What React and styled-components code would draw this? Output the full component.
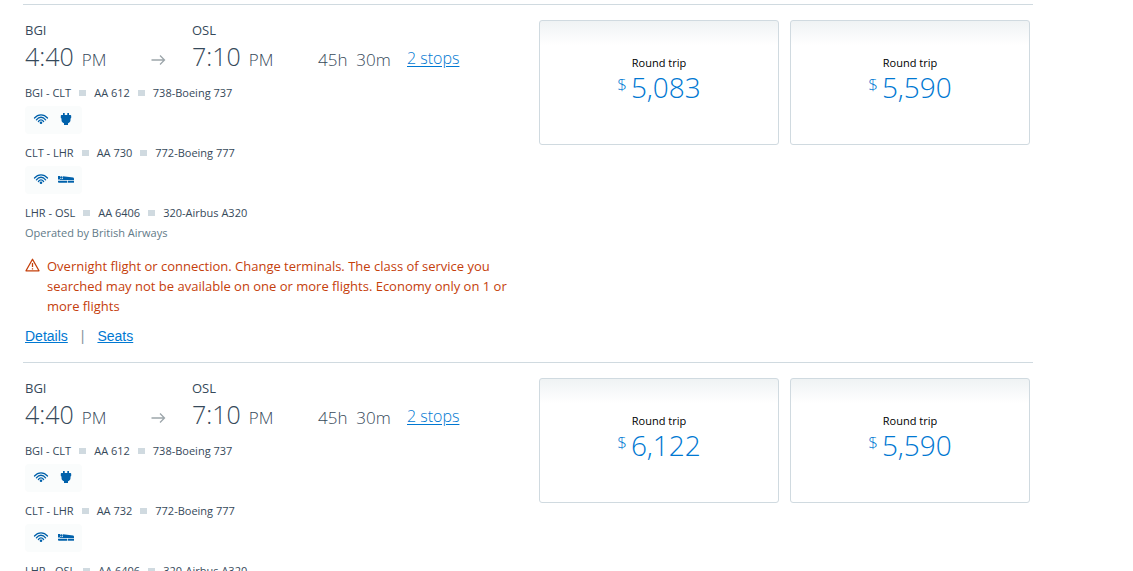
import React from "react";
import styled, { createGlobalStyle } from "styled-components";

const GlobalStyle = createGlobalStyle`
  * { box-sizing: border-box; }
  body {
    margin: 0;
    background: #fff;
    color: #36495a;
    font-family: "Open Sans", "Noto Sans", sans-serif;
  }
`;

const Results = styled.main`
  padding: 4px 100px 0 23px;
`;

const FlightRow = styled.article`
  display: grid;
  grid-template-columns: minmax(0, 1fr) 240px 240px;
  column-gap: 11px;
  align-items: start;
  padding: 15px 3px 16px 2px;
  border-top: 1px solid #d0dae0;
`;

const FlightInfo = styled.div`
  min-width: 0;
`;

const Summary = styled.div`
  display: grid;
  grid-template-columns: 126px 41px 126px 89px 1fr;
  grid-template-rows: 20px 36px;
  align-items: baseline;
  margin-bottom: 7px;
`;

const Airport = styled.span`
  grid-row: 1;
  grid-column: ${(p) => p.$column};
  font-size: 13px;
  line-height: 20px;
`;

const Time = styled.span`
  grid-row: 2;
  grid-column: ${(p) => p.$column};
  font-size: 25px;
  font-weight: 300;
  line-height: 32px;
  white-space: nowrap;
`;

const Meridiem = styled.span`
  margin-left: 8px;
  font-size: 17px;
`;

const ArrowIcon = styled.svg`
  grid-row: 2;
  grid-column: 2;
  align-self: center;
  margin-top: 4px;
  width: 15px;
  height: 12px;
`;

const Duration = styled.span`
  grid-row: 2;
  grid-column: 4;
  font-size: 17px;
  font-weight: 300;
  white-space: pre;
`;

const StopsLink = styled.a`
  grid-row: 2;
  grid-column: 5;
  align-self: start;
  justify-self: start;
  font-size: 16px;
  font-weight: 300;
  line-height: 36px;
  color: #0078d2;
  text-underline-offset: 2px;
`;

const Segments = styled.ul`
  display: grid;
  row-gap: 9px;
  margin: 0;
  padding: 0;
  list-style: none;
`;

const SegmentLine = styled.div`
  display: flex;
  align-items: center;
  gap: 8px;
  font-size: 11px;
  line-height: 20px;
`;

const Square = styled.span`
  width: 7px;
  height: 6px;
  background: #d0dae0;
`;

const Amenities = styled.div`
  display: flex;
  align-items: center;
  gap: 9px;
  width: 57px;
  height: 28px;
  margin-top: 3px;
  padding: 0 8px 2px;
  border-radius: 4px;
  background: #fafcfc;
`;

const AmenityIcon = styled.svg`
  width: 16px;
  height: 16px;
`;

const Operator = styled.div`
  font-size: 11px;
  line-height: 20px;
  color: #627a88;
`;

const Notice = styled.p`
  display: grid;
  grid-template-columns: 14px minmax(0, 1fr);
  column-gap: 8px;
  max-width: 488px;
  margin: 13px 0 10px;
  font-size: 13px;
  line-height: 20px;
  color: #c5400b;
`;

const NoticeIcon = styled.svg`
  width: 15px;
  height: 14px;
  margin-top: 2px;
`;

const Actions = styled.nav`
  display: flex;
  gap: 13px;
  font-family: "Liberation Sans", Arial, sans-serif;
  font-size: 14px;
  line-height: 20px;
  color: #8a959e;
`;

const ActionLink = styled.a`
  color: #0078d2;
`;

const FareCard = styled.button`
  display: flex;
  flex-direction: column;
  align-items: center;
  min-height: 125px;
  padding: 34px 8px;
  border: 1px solid #d0dae0;
  border-radius: 3px;
  background: linear-gradient(#eff3f4, #fff 24px);
  font-family: inherit;
  cursor: pointer;
`;

const FareLabel = styled.span`
  font-size: 11px;
  line-height: 16px;
  color: #000;
`;

const Price = styled.span`
  display: flex;
  align-items: flex-start;
  gap: 4px;
  font-size: 28px;
  font-weight: 300;
  line-height: 32px;
  color: #0078d2;
`;

const Currency = styled.span`
  font-size: 17px;
  line-height: 28px;
`;

const Wifi = () => (
  <AmenityIcon viewBox="0 0 16 16" role="img" aria-label="Wi-Fi">
    <g fill="none" stroke="#0061ab" strokeWidth="1.3" strokeLinecap="round">
      <path d="M1.500 7C5.200 2.700 10.800 2.700 14.500 7" />
      <path d="M3.400 8.800C6.200 5.400 9.800 5.400 12.600 8.800" />
      <path d="M5.400 10.500C7 8.300 9 8.300 10.600 10.500" />
    </g>
    <circle cx="8" cy="11.700" r="1.300" fill="#0061ab" />
  </AmenityIcon>
);

const Plug = () => (
  <AmenityIcon viewBox="0 0 16 16" role="img" aria-label="Power outlet">
    <path
      fill="#0061ab"
      d="M5 2h1.700v2h2.600V2H11v2h1.400q.8 0 .8.800v2q0 .7-.7.800v1.300c0 1.700-1 2.800-2.500 3.300V14H6v-1.800C4.500 11.700 3.500 10.600 3.500 8.900V7.600q-.7-.1-.7-.8v-2q0-.8.8-.8H5z"
    />
  </AmenityIcon>
);

const FlatSeat = () => (
  <AmenityIcon viewBox="0 0 16 16" role="img" aria-label="Lie-flat seat">
    <g fill="#0061ab">
      <path d="M0 5h2v3.600H0z" />
      <circle cx="3.400" cy="6.500" r="1.300" />
      <path d="M2 8h3v.9H2z" />
      <path d="M5 5.200l10.200 1.400q.8.200.8 1.100v1.200H5z" />
      <path d="M0 9.700h9.300v2H.9q-.9 0-.9-.9z" />
      <path d="M10 9.700h6v2h-6z" />
    </g>
  </AmenityIcon>
);

const amenityIcons = { wifi: Wifi, power: Plug, flat: FlatSeat };

const flights = [
  { second: "AA 730", fares: ["5,083", "5,590"] },
  { second: "AA 732", fares: ["6,122", "5,590"] },
].map(({ second, fares }) => ({
  fares,
  segments: [
    { parts: ["BGI - CLT", "AA 612", "738-Boeing 737"], amenities: ["wifi", "power"] },
    { parts: ["CLT - LHR", second, "772-Boeing 777"], amenities: ["wifi", "flat"] },
    {
      parts: ["LHR - OSL", "AA 6406", "320-Airbus A320"],
      amenities: [],
      operator: "Operated by British Airways",
    },
  ],
}));

function Segment({ parts, amenities, operator }) {
  return (
    <li>
      <SegmentLine>
        {parts.map((part, i) => (
          <React.Fragment key={part}>
            {i > 0 && <Square />}
            <span>{part}</span>
          </React.Fragment>
        ))}
      </SegmentLine>
      {amenities.length > 0 && (
        <Amenities>
          {amenities.map((name) => {
            const Icon = amenityIcons[name];
            return <Icon key={name} />;
          })}
        </Amenities>
      )}
      {operator && <Operator>{operator}</Operator>}
    </li>
  );
}

function Flight({ segments, fares }) {
  return (
    <FlightRow>
      <FlightInfo>
        <Summary>
          <Airport $column={1}>BGI</Airport>
          <Airport $column={3}>OSL</Airport>
          <Time $column={1}>
            4:40<Meridiem>PM</Meridiem>
          </Time>
          <ArrowIcon viewBox="0 0 15 12" aria-hidden="true">
            <path d="M0.500 6H13.500M9 1.500L13.500 6L9 10.500" fill="none" stroke="#9da6ab" strokeWidth="1.300" />
          </ArrowIcon>
          <Time $column={3}>
            7:10<Meridiem>PM</Meridiem>
          </Time>
          <Duration>{"45h  30m"}</Duration>
          <StopsLink href="#stops">2 stops</StopsLink>
        </Summary>
        <Segments>
          {segments.map((segment) => (
            <Segment key={segment.parts[0]} {...segment} />
          ))}
        </Segments>
        <Notice>
          <NoticeIcon viewBox="0 0 15 14" aria-hidden="true">
            <path d="M7.500 1.200L14 12.800H1z" fill="none" stroke="#c5400b" strokeWidth="1.300" strokeLinejoin="round" />
            <path d="M7.500 5v4M7.500 10.200v1.300" stroke="#c5400b" strokeWidth="1.300" />
          </NoticeIcon>
          <span>
            Overnight flight or connection. Change terminals. The class of service you searched
            may not be available on one or more flights. Economy only on 1 or more flights
          </span>
        </Notice>
        <Actions>
          <ActionLink href="#details">Details</ActionLink>
          <span>|</span>
          <ActionLink href="#seats">Seats</ActionLink>
        </Actions>
      </FlightInfo>
      {fares.map((fare, i) => (
        <FareCard key={i} type="button">
          <FareLabel>Round trip</FareLabel>
          <Price>
            <Currency>$</Currency>
            {fare}
          </Price>
        </FareCard>
      ))}
    </FlightRow>
  );
}

export default function App() {
  return (
    <>
      <GlobalStyle />
      <Results>
        {flights.map((flight, i) => (
          <Flight key={i} {...flight} />
        ))}
      </Results>
    </>
  );
}
